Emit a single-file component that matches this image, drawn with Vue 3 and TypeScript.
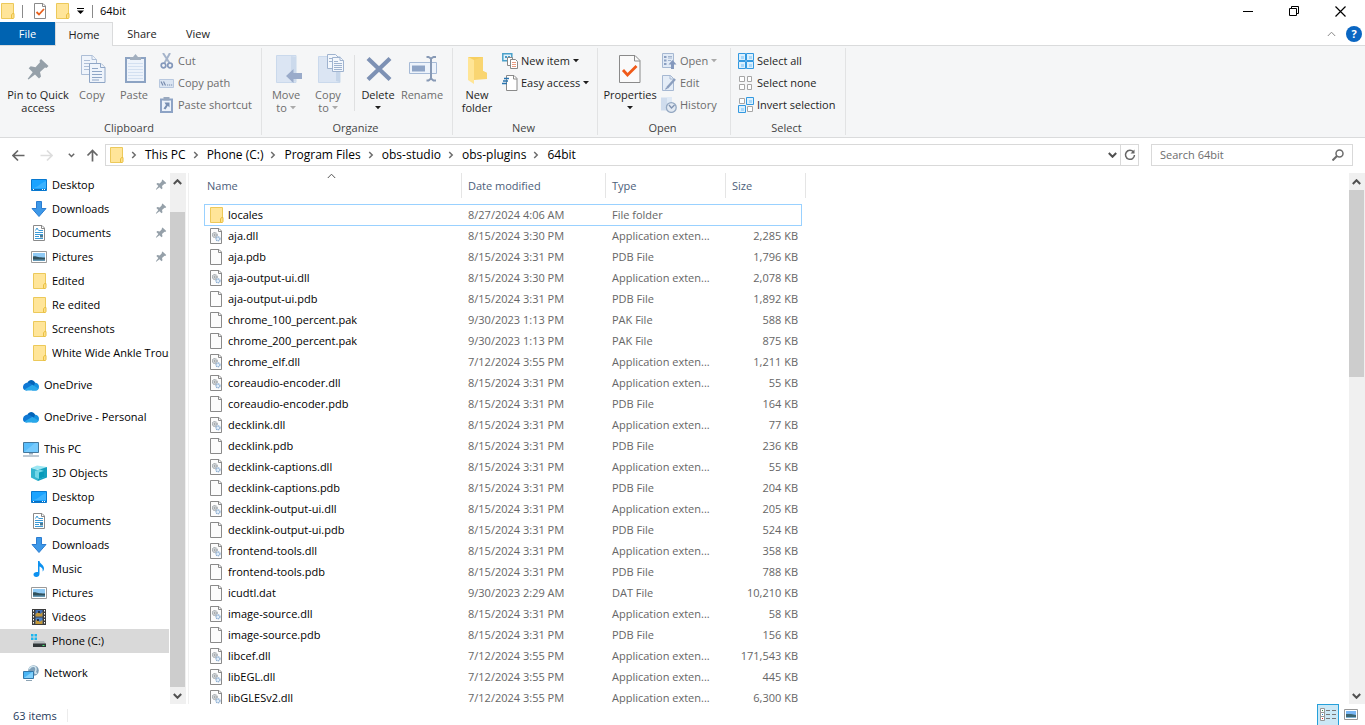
<script setup lang="ts">
interface NavItem { icon: string; label: string; pin?: boolean; root?: boolean; active?: boolean }
interface FileRow { name: string; date: string; type: string; size: string; icon: string }
interface Cmd { label: string; icon: string; off?: boolean; caret?: boolean }

const crumbs = ['This PC', 'Phone (C:)', 'Program Files', 'obs-studio', 'obs-plugins', '64bit']

const clipboardCmds: Cmd[] = [
  { label: 'Cut', icon: 'cut', off: true },
  { label: 'Copy path', icon: 'copypath', off: true },
  { label: 'Paste shortcut', icon: 'pasteshort', off: true },
]
const newCmds: Cmd[] = [
  { label: 'New item', icon: 'newitem', caret: true },
  { label: 'Easy access', icon: 'easy', caret: true },
]
const openCmds: Cmd[] = [
  { label: 'Open', icon: 'open', off: true, caret: true },
  { label: 'Edit', icon: 'edit', off: true },
  { label: 'History', icon: 'history', off: true },
]
const selectCmds: Cmd[] = [
  { label: 'Select all', icon: 'selall' },
  { label: 'Select none', icon: 'selnone' },
  { label: 'Invert selection', icon: 'selinv' },
]

const quick: NavItem[] = [
  { icon: 'desktop', label: 'Desktop', pin: true },
  { icon: 'downloads', label: 'Downloads', pin: true },
  { icon: 'documents', label: 'Documents', pin: true },
  { icon: 'pictures', label: 'Pictures', pin: true },
  { icon: 'folder', label: 'Edited' },
  { icon: 'folder', label: 'Re edited' },
  { icon: 'folder', label: 'Screenshots' },
  { icon: 'folder', label: 'White Wide Ankle Trousers' },
]
const pc: NavItem[] = [
  { icon: 'pc', label: 'This PC', root: true },
  { icon: 'objects', label: '3D Objects' },
  { icon: 'desktop', label: 'Desktop' },
  { icon: 'documents', label: 'Documents' },
  { icon: 'downloads', label: 'Downloads' },
  { icon: 'music', label: 'Music' },
  { icon: 'pictures', label: 'Pictures' },
  { icon: 'videos', label: 'Videos' },
  { icon: 'drive', label: 'Phone (C:)', active: true },
]
const navGroups: NavItem[][] = [
  quick,
  [{ icon: 'cloud', label: 'OneDrive', root: true }],
  [{ icon: 'cloud', label: 'OneDrive - Personal', root: true }],
  pc,
  [{ icon: 'network', label: 'Network', root: true }],
]

const aug = '8/15/2024 3:31 PM'
const jul = '7/12/2024 3:55 PM'
const source: [string, string, string][] = [
  ['aja.dll', '8/15/2024 3:30 PM', '2,285 KB'],
  ['aja.pdb', aug, '1,796 KB'],
  ['aja-output-ui.dll', '8/15/2024 3:30 PM', '2,078 KB'],
  ['aja-output-ui.pdb', aug, '1,892 KB'],
  ['chrome_100_percent.pak', '9/30/2023 1:13 PM', '588 KB'],
  ['chrome_200_percent.pak', '9/30/2023 1:13 PM', '875 KB'],
  ['chrome_elf.dll', jul, '1,211 KB'],
  ['coreaudio-encoder.dll', aug, '55 KB'],
  ['coreaudio-encoder.pdb', aug, '164 KB'],
  ['decklink.dll', aug, '77 KB'],
  ['decklink.pdb', aug, '236 KB'],
  ['decklink-captions.dll', aug, '55 KB'],
  ['decklink-captions.pdb', aug, '204 KB'],
  ['decklink-output-ui.dll', aug, '205 KB'],
  ['decklink-output-ui.pdb', aug, '524 KB'],
  ['frontend-tools.dll', aug, '358 KB'],
  ['frontend-tools.pdb', aug, '788 KB'],
  ['icudtl.dat', '9/30/2023 2:29 AM', '10,210 KB'],
  ['image-source.dll', aug, '58 KB'],
  ['image-source.pdb', aug, '156 KB'],
  ['libcef.dll', jul, '171,543 KB'],
  ['libEGL.dll', jul, '445 KB'],
  ['libGLESv2.dll', jul, '6,300 KB'],
]
const typeOf = (name: string): string => {
  const ext = name.slice(name.lastIndexOf('.') + 1)
  return ext === 'dll' ? 'Application exten...' : `${ext.toUpperCase()} File`
}
const files: FileRow[] = [
  { name: 'locales', date: '8/27/2024 4:06 AM', type: 'File folder', size: '', icon: 'folder' },
  ...source.map(([name, date, size]) => ({
    name, date, size, type: typeOf(name), icon: name.endsWith('.dll') ? 'dll' : 'file',
  })),
]
</script>

<template>
  <svg class="defs" aria-hidden="true">
    <symbol id="folder" viewBox="0 0 16 16"><path d="M2.500 .5h12v15h-12z" fill="#ffe599" stroke="#ecc95a" /><path d="M12.500 15.500v-3.500l1-1.500h1.500v4l-1 1z" fill="#ffe08a" stroke="#e9c042" /></symbol>
    <symbol id="file" viewBox="0 0 16 16"><path d="M2.500 .5h8.500l2.500 2.500v12.500h-11z" fill="#fcfcfc" stroke="#8a8a8a" /><path d="M10.500 .5v3h3" fill="none" stroke="#8a8a8a" /></symbol>
    <symbol id="dll" viewBox="0 0 16 16"><path d="M2.500 .5h8.500l2.500 2.500v12.500h-11z" fill="#fcfcfc" stroke="#8a8a8a" /><path d="M10.500 .5v3h3" fill="none" stroke="#8a8a8a" /><circle cx="6.800" cy="7" r="2.300" fill="#e4e7e9" stroke="#8f969b" stroke-width="1.200" stroke-dasharray="1.200 .5" /><circle cx="6.800" cy="7" r=".8" fill="#7a7f83" /><circle cx="10" cy="10.800" r="2" fill="#e3eef9" stroke="#86a9cf" stroke-width="1.200" stroke-dasharray="1.200 .5" /></symbol>
    <symbol id="props" viewBox="0 0 16 16"><path d="M2.500 .5h8.500l2.500 2.500v12.500h-11z" fill="#fff" stroke="#8a8a8a" /><path d="M10.500 .5v3h3" fill="none" stroke="#8a8a8a" /><path d="M4.500 9l2.500 2.500 5-5.500" fill="none" stroke="#e8601c" stroke-width="1.800" /></symbol>
    <symbol id="desktop" viewBox="0 0 16 16"><path d="M.5 2.500h15v11h-15z" fill="#1aa3ff" stroke="#0878cf" /><path d="M1 11C7 11 9 6 15 4v7z" fill="#3bb2ff" /><path d="M1 12.500h14" stroke="#0b6fbe" /><path d="M2 12.500h1M11 12.500h1M13 12.500h1" stroke="#fff" /></symbol>
    <symbol id="downloads" viewBox="0 0 16 16"><path d="M5.500 .5h5v7h4.500l-7 8-7-8h4.500z" fill="#3d98e8" stroke="#2b7cd0" /></symbol>
    <symbol id="documents" viewBox="0 0 16 16"><path d="M2.500 .5h8.500l2.500 2.500v12.500h-11z" fill="#fff" stroke="#8a8a8a" /><path d="M10.500 .5v3h3" fill="none" stroke="#8a8a8a" /><path d="M4.500 5.500l1.500-2.500 1.500 2.500M8 5.500h4M4 7.500h8M4 9.500h8M4 11.500h4M4 13.500h8" fill="none" stroke="#3c9ad6" /><path d="M9 10h3v2.500h-3z" fill="#4d7a93" /></symbol>
    <symbol id="pictures" viewBox="0 0 16 16"><path d="M.5 2.500h15v11h-15z" fill="#fff" stroke="#9a9a9a" /><path d="M2 4h12v8h-12z" fill="#8fcaf5" /><path d="M2 7.500c3-1 4 1 12 1v3.500h-12z" fill="#31515d" /><path d="M2 10.500h12v1.500h-12z" fill="#6699b5" /></symbol>
    <symbol id="cloud" viewBox="0 0 16 16"><path d="M4.500 5.500C6 2 10.500 2 12 5.500L14 9 4 10z" fill="#0364b8" /><path d="M0 10.500C0 7 2.500 5.500 5 5.700c2 0 3 1 5 2.500L4 13.500C1.500 13.500 0 12.500 0 10.500z" fill="#0f78d4" /><path d="M12 5.800c2 0 4 1.500 4 4 0 2.500-1.500 3.700-3.500 3.700H9z" fill="#1490df" /><path d="M1.500 12.500L9.500 7.700l6 4c-.7 1.300-1.500 1.800-3 1.800H4c-1 0-2-.4-2.500-1z" fill="#28a8ea" /></symbol>
    <symbol id="pc" viewBox="0 0 16 16"><path d="M.5 1.500h15v10h-15z" fill="#58bdfb" stroke="#45789c" /><path d="M1 11L12 2h3v9z" fill="#8ad2ff" opacity=".6" /><path d="M6 12h4v1.500h-4z" fill="#9ab" /><path d="M0 15h16" stroke="#8095a8" /></symbol>
    <symbol id="objects" viewBox="0 0 16 16"><path d="M0 3L6 .5l10 1.500-5 3.500z" fill="#9de6f2" /><path d="M0 3l7 2v11l-7-3.500z" fill="#34b5d0" /><path d="M7 5l9-3v10.500L7 16z" fill="#15a0be" /><path d="M4 6l5-1.500 4 1.500v6l-5 2-4-2z" fill="#72d7e7" /><path d="M8 7.500l5-1.500v6l-5 2z" fill="#079ab9" /></symbol>
    <symbol id="music" viewBox="0 0 16 16"><path d="M7 0h1.500c.5 3.500 4.500 3.500 4.500 7.500 0 1.500-.8 2.500-1.500 3 .8-3-1-4.200-3-5V13c0 1.800-1.500 3-3.300 3C3.500 16 2.500 15 2.500 13.500c0-1.700 2-3 4.500-2.500z" fill="#0c91f0" /></symbol>
    <symbol id="videos" viewBox="0 0 16 16"><path d="M1 0h14v16h-14z" fill="#3c3c3c" /><path d="M4.500 1h7v6.500h-7z" fill="#426fb5" /><path d="M4.500 8.500h7v6.500h-7z" fill="#4c83cb" /><path d="M4.500 5l3-2 2 2 2-2v4.500h-7zM4.500 12l2-2 2 3 3-2v4h-7z" fill="#c49838" /><path d="M7 2h2v2h-2zM6 10h2v2h-2z" fill="#263445" /><path d="M2.500 1v15M13.500 1v15" stroke="#fff" stroke-dasharray="1.500 1.500" /></symbol>
    <symbol id="drive" viewBox="0 0 16 16"><path d="M0 1h2.500v2.500h-2.500zM3.500 1h2.500v2.500h-2.500zM0 4.500h2.500v2.500h-2.500zM3.500 4.500h2.500v2.500h-2.500z" fill="#1cb5ee" /><path d="M3 8h10l2 3h-13z" fill="#b4b9bc" /><path d="M2 10.500h13v3.500h-13z" fill="#303638" /><path d="M11.500 12.500h2" stroke="#44ed71" /></symbol>
    <symbol id="network" viewBox="0 0 16 16"><circle cx="10.500" cy="5.500" r="5.300" fill="#7f9fb8" /><path d="M6 4c3-4 7-3 7 0S10 9 14 8" fill="none" stroke="#d2e6ef" stroke-width="1.500" /><path d="M.5 6.500h10v7h-10z" fill="#49b5f5" stroke="#3376a8" /><path d="M1 13l8-6h1v6z" fill="#80d0fc" /><path d="M3 15.500h6" stroke="#8da4b4" /></symbol>
    <symbol id="pin" viewBox="0 0 32 32"><path d="M19 5l7.500 7-2 2-1.500-.5-5 4.500 1 4.500-2 2-4-4-6.500 5-.8-.8 5-6.500-4-4 2-2 4.800 1 4.500-5-.5-1.500z" fill="#95a0a9" /></symbol>
    <symbol id="copy" viewBox="0 0 32 32"><g fill="#eff4fb" stroke="#adbed6"><path d="M5.500 1.500h11l4 4v15h-15z" /><path d="M16 1.500v4h4.500M8 6.500h6M8 9.500h10M8 12.500h10M8 15.500h10" /><path d="M13.500 9.500h11.500l4 4v15h-15.500z" stroke="#8fa6c6" /><path d="M24.500 9.500v4h4.500M16 14.500h6M16 17.500h10M16 20.500h10M16 23.500h10M16 26h7" stroke="#8fa6c6" /></g></symbol>
    <symbol id="paste" viewBox="0 0 32 32"><path d="M8 4h19v24h-19z" fill="#edf3fb" stroke="#8ca3c3" stroke-width="2" /><path d="M10 9.500h15M10 12.500h15M10 15.500h15M10 18.500h15M10 21.500h15M10 24.500h15" stroke="#d3e0f1" /><path d="M12 6V3h3l2.500-3L20 3h3v3z" fill="#a2afbf" /></symbol>
    <symbol id="moveto" viewBox="0 0 32 32"><path d="M6.500 1.500h19.500v27h-19.500z" fill="#dbe5f3" stroke="#cad9ec" /><path d="M21 2l5 1v24l-5 1z" fill="#ccdaec" /><path d="M16 22l7.500-7v4h8.500v6h-8.500v4z" fill="#9aabca" /></symbol>
    <symbol id="copyto" viewBox="0 0 32 32"><path d="M6.500 2.500h21.500v26h-21.500z" fill="#dbe5f3" stroke="#cad9ec" /><path d="M24 18l4-1v11l-4-1z" fill="#c5d5e9" /><g fill="#f3f7fc" stroke="#9fb3cf"><path d="M15.500 .5h8l3 3v11h-11z" /><path d="M17 4.500h5M17 7.500h5" /><path d="M20.500 3.500h8l3 3v11h-11z" /><path d="M28 3.500v3h3.500M22 7.500h4M22 9.500h8M22 11.500h8M22 13.500h8M22 15.500h8" /></g></symbol>
    <symbol id="delete" viewBox="0 0 32 32"><path d="M6 4.500l22 21M28 4.500l-22 21" stroke="#7d91b4" stroke-width="4.200" /></symbol>
    <symbol id="rename" viewBox="0 0 32 32"><path d="M3.500 8.500h27v11h-27z" fill="#edf3fb" stroke="#a6bad6" /><path d="M6 11.500h13v6h-13z" fill="#8ea4c6" /><path d="M20.500 3h2l2.500 1.500 2.500-1.500h2.500M25 4.500v20M20.500 26.500h2l2.500-2 2.500 2h2.500" fill="none" stroke="#8799b5" stroke-width="2" /></symbol>
    <symbol id="newfolder" viewBox="0 0 32 32"><path d="M7 3h15v14l4 2v6h-15z" fill="#f7cf60" /><path d="M7 3l6 3v24l-6-4z" fill="#ffe596" /><path d="M13 6l9-3v14l4 2v6l-13 1z" fill="#f9d571" /></symbol>
    <symbol id="bigprops" viewBox="0 0 32 32"><path d="M5.500 1.500h15.500l5 5v22h-20.500z" fill="#fafafa" stroke="#8a8a8a" /><path d="M20.500 1.500v5.500h5.500" fill="none" stroke="#8a8a8a" /><path d="M9 16l4.500 5L22.500 12" fill="none" stroke="#f05a19" stroke-width="2.800" /></symbol>
    <symbol id="cut" viewBox="0 0 16 16"><path d="M4 0l6.500 10M11 0L5.500 10" stroke="#a5b4cb" stroke-width="2" /><circle cx="4.500" cy="12.500" r="2.300" fill="none" stroke="#8498bb" stroke-width="1.700" /><circle cx="11" cy="12.500" r="2.300" fill="none" stroke="#8498bb" stroke-width="1.700" /></symbol>
    <symbol id="copypath" viewBox="0 0 16 16"><path d="M.5 4.500h14v8h-14z" fill="#dbe5f2" stroke="#b8c8df" /><path d="M2 6.500l2 4M4.500 6.500l2 4M8 10h1.200M10 10h1.200M12 10h1.200" stroke="#778bad" stroke-width="1.200" /></symbol>
    <symbol id="pasteshort" viewBox="0 0 16 16"><path d="M2 2.500h11v12.500h-11z" fill="#edf3fb" stroke="#8da3c5" stroke-width="2" /><path d="M4.500 3.500V0h6v3.500z" fill="#98a8bf" /><path d="M5.500 5.500h5v5l-1.700-1.700-2.300 3.700-2-1 2.500-3.500z" fill="#788fb3" /></symbol>
    <symbol id="newitem" viewBox="0 0 16 16"><path d="M.8 .8h9v7h-9z" fill="#e4f3fb" stroke="#4aa0ca" stroke-width="1.500" /><path d="M3 3h2v2h-2zM6 3h2v2h-2z" fill="#4c9cc7" /><path d="M5.500 4.500h5v8h-5z" fill="#fff" stroke="#888" /><path d="M8.500 6.500h5l2 2v7h-7z" fill="#fff" stroke="#888" /><path d="M10 9.500h4M10 11.500h4M10 13.500h4" stroke="#e99c81" /></symbol>
    <symbol id="easy" viewBox="0 0 16 16"><path d="M4.500 .5h7.500l3 3v12h-10.500z" fill="#fff" stroke="#8a8a8a" /><path d="M11.500 .5v3.500h3.500" fill="none" stroke="#8a8a8a" /><path d="M2 3.500h5M1 6h5M0 8.500h5" stroke="#2974af" stroke-width="1.400" /></symbol>
    <symbol id="open" viewBox="0 0 16 16"><path d="M1.500 .5h11v14h-11z" fill="#e2ebf6" stroke="#a6b8d2" /><path d="M3 3h2.500v2h-2.500zM3 6.500h2.500v2h-2.500zM3 10h2.500v2h-2.500z" fill="#8ba0c2" /><path d="M7 3.500h4M7 5h4M7 7.500h3" stroke="#a2b4cf" /><path d="M11.500 7l4 4.500h-2.500v4.500h-3v-4.500h-2.500z" fill="#8398bd" /></symbol>
    <symbol id="edit" viewBox="0 0 16 16"><path d="M1.500 .5h8l3 3v12h-11z" fill="#e5edf7" stroke="#a6b8d2" /><path d="M9 .5v3.500h3.500" fill="none" stroke="#a6b8d2" /><path d="M14 4l-8 9" stroke="#8c9fbe" stroke-width="2.400" /><path d="M5 12.500l1.500 1.200-2.500 1z" fill="#8297bb" /></symbol>
    <symbol id="history" viewBox="0 0 16 16"><path d="M0 .5h9v13h-9z" fill="#cfdced" /><path d="M6 0h5v7h-5z" fill="#dfe9f5" /><circle cx="10.300" cy="10.500" r="4.900" fill="#e2e9f2" stroke="#94a8c2" stroke-width="1.300" /><path d="M8 8l2.500 3 3-3" fill="none" stroke="#8093b1" stroke-width="1.300" /></symbol>
    <symbol id="selall" viewBox="0 0 16 16"><path d="M.5 .5h7v7h-7zM8.500 .5h7v7h-7zM.5 8.500h7v7h-7zM8.500 8.500h7v7h-7z" fill="#dcf0fd" stroke="#3399e0" /><path d="M3 3h3v3h-3zM11 3h3v3h-3zM3 11h3v3h-3zM11 11h3v3h-3z" fill="#a9d8f9" /></symbol>
    <symbol id="selnone" viewBox="0 0 16 16"><path d="M1.500 1.500h5v5h-5zM9.500 1.500h4v5h-4zM1.500 9.500h5v5h-5zM9.500 9.500h4v5h-4z" fill="#fff" stroke="#a6a6a6" /></symbol>
    <symbol id="selinv" viewBox="0 0 16 16"><path d="M1.500 1.500h5v5h-5zM9.500 9.500h5v5h-5z" fill="#fff" stroke="#a6a6a6" /><path d="M8.500 .5h7v7h-7zM.5 8.500h7v7h-7z" fill="#dcf0fd" stroke="#3399e0" /><path d="M11 3h3v3h-3zM3 11h3v3h-3z" fill="#a9d8f9" /></symbol>
    <symbol id="caret" viewBox="0 0 6 4"><path d="M0 0h6L3 3.300z" fill="currentColor" /></symbol>
    <symbol id="up" viewBox="0 0 9 6"><path d="M.8 5l3.700-3.800L8.200 5" fill="none" stroke="currentColor" /></symbol>
    <symbol id="down" viewBox="0 0 9 6"><path d="M.8 1l3.700 3.800L8.200 1" fill="none" stroke="currentColor" /></symbol>
    <symbol id="chev" viewBox="0 0 6 8"><path d="M1.200 1l3 3-3 3" fill="none" stroke="#6c6c6c" stroke-width="1.500" /></symbol>
  </svg>

  <div class="window">
    <header class="titlebar">
      <svg class="i16"><use href="#folder" /></svg>
      <span class="tick"></span>
      <button class="bare qa" aria-label="Properties"><svg class="i16"><use href="#props" /></svg></button>
      <button class="bare qa" aria-label="New folder"><svg class="i16"><use href="#folder" /></svg></button>
      <button class="bare customize" aria-label="Customize Quick Access Toolbar">
        <svg width="7" height="6" viewBox="0 0 7 6"><path d="M0 .5h7" stroke="#000" /><path d="M0 2.500h7L3.500 6z" /></svg>
      </button>
      <span class="tick last"></span>
      <span class="title">64bit</span>
      <div class="controls">
        <button class="bare" aria-label="Minimize"><svg width="11" height="11" viewBox="0 0 11 11"><path d="M0 5.500h10" stroke="#000" /></svg></button>
        <button class="bare" aria-label="Restore"><svg width="11" height="11" viewBox="0 0 11 11"><path d="M.5 2.500h7v7h-7zM2.500 2.500v-2h7v7h-2" fill="none" stroke="#000" /></svg></button>
        <button class="bare" aria-label="Close"><svg width="11" height="11" viewBox="0 0 11 11"><path d="M.5 .5l10 10M10.500 .5l-10 10" stroke="#000" stroke-width="1.200" /></svg></button>
      </div>
    </header>

    <nav class="tabs">
      <button class="bare tab file">File</button>
      <button class="bare tab home">Home</button>
      <button class="bare tab">Share</button>
      <button class="bare tab">View</button>
      <div class="tabtools">
        <button class="bare collapse" aria-label="Minimize the Ribbon"><svg class="ch"><use href="#up" /></svg></button>
        <button class="bare help" aria-label="Help">?</button>
      </div>
    </nav>

    <section class="ribbon">
      <div class="group clip">
        <div class="cmds">
          <button class="bare big w66"><svg class="i32"><use href="#pin" /></svg>Pin to Quick<br>access</button>
          <button class="bare big w42 off"><svg class="i32"><use href="#copy" /></svg>Copy</button>
          <button class="bare big w42 off"><svg class="i32"><use href="#paste" /></svg>Paste</button>
          <div class="col">
            <button v-for="c in clipboardCmds" :key="c.label" class="bare small" :class="{ off: c.off }"><svg class="i16"><use :href="'#' + c.icon" /></svg>{{ c.label }}</button>
          </div>
        </div>
        <div class="glabel">Clipboard</div>
      </div>
      <div class="group org">
        <div class="cmds">
          <button class="bare big w42 off"><svg class="i32"><use href="#moveto" /></svg>Move<br>to <svg class="caret"><use href="#caret" /></svg></button>
          <button class="bare big w42 off"><svg class="i32"><use href="#copyto" /></svg>Copy<br>to <svg class="caret"><use href="#caret" /></svg></button>
          <span class="inner"></span>
          <button class="bare big w42"><svg class="i32"><use href="#delete" /></svg>Delete<br><svg class="caret"><use href="#caret" /></svg></button>
          <button class="bare big w46 off"><svg class="i32"><use href="#rename" /></svg>Rename</button>
        </div>
        <div class="glabel">Organize</div>
      </div>
      <div class="group new">
        <div class="cmds">
          <button class="bare big w42"><svg class="i32"><use href="#newfolder" /></svg>New<br>folder</button>
          <div class="col">
            <button v-for="c in newCmds" :key="c.label" class="bare small"><svg class="i16"><use :href="'#' + c.icon" /></svg>{{ c.label }}<svg class="caret"><use href="#caret" /></svg></button>
          </div>
        </div>
        <div class="glabel">New</div>
      </div>
      <div class="group opn">
        <div class="cmds">
          <button class="bare big w54"><svg class="i32"><use href="#bigprops" /></svg>Properties<br><svg class="caret"><use href="#caret" /></svg></button>
          <div class="col">
            <button v-for="c in openCmds" :key="c.label" class="bare small off"><svg class="i16"><use :href="'#' + c.icon" /></svg>{{ c.label }}<svg v-if="c.caret" class="caret"><use href="#caret" /></svg></button>
          </div>
        </div>
        <div class="glabel">Open</div>
      </div>
      <div class="group sel">
        <div class="cmds">
          <div class="col">
            <button v-for="c in selectCmds" :key="c.label" class="bare small"><svg class="i16"><use :href="'#' + c.icon" /></svg>{{ c.label }}</button>
          </div>
        </div>
        <div class="glabel">Select</div>
      </div>
    </section>

    <div class="addressbar">
      <button class="bare arrow" aria-label="Back"><svg width="13" height="13" viewBox="0 0 13 13"><path d="M12.500 6.500h-11M6 1.500l-5 5 5 5" fill="none" stroke="#666" stroke-width="1.700" /></svg></button>
      <button class="bare arrow" aria-label="Forward"><svg width="13" height="13" viewBox="0 0 13 13"><path d="M.5 6.500h11M7 1.500l5 5-5 5" fill="none" stroke="#ddd" stroke-width="1.700" /></svg></button>
      <button class="bare recent" aria-label="Recent locations"><svg width="7" height="5" viewBox="0 0 7 5"><path d="M.8 .8l2.700 2.700L6.200 .8" fill="none" stroke="#666" stroke-width="1.500" /></svg></button>
      <button class="bare upward" aria-label="Up"><svg width="13" height="13" viewBox="0 0 13 13"><path d="M6.500 12.500v-11M1.500 6.500l5-5 5 5" fill="none" stroke="#666" stroke-width="1.700" /></svg></button>
      <div class="address">
        <svg class="i16"><use href="#folder" /></svg>
        <template v-for="c in crumbs" :key="c">
          <svg class="chev"><use href="#chev" /></svg>
          <a class="crumb" href="#">{{ c }}</a>
        </template>
        <button class="bare prev" aria-label="Previous locations"><svg class="ch bold"><use href="#down" /></svg></button>
        <button class="bare refresh" aria-label="Refresh"><svg width="12" height="12" viewBox="0 0 12 12"><path d="M9.500 3A4.500 4.500 0 1 0 10.500 6" fill="none" stroke="#666" stroke-width="1.500" /><path d="M10.500 .5v4h-4z" fill="#666" /></svg></button>
      </div>
      <label class="search">
        <input type="text" placeholder="Search 64bit" aria-label="Search 64bit">
        <svg width="12" height="12" viewBox="0 0 12 12"><circle cx="7.500" cy="4.500" r="3.500" fill="none" stroke="#6c6c6c" stroke-width="1.500" /><path d="M5 7l-4.500 4.500" stroke="#6c6c6c" stroke-width="2" /></svg>
      </label>
    </div>

    <main class="body">
      <nav class="tree">
        <ul v-for="(g, gi) in navGroups" :key="gi">
          <li v-for="n in g" :key="n.label">
            <a href="#" :class="{ root: n.root, active: n.active }">
              <svg class="i16"><use :href="'#' + n.icon" /></svg>
              <span class="nlabel">{{ n.label }}</span>
              <svg v-if="n.pin" class="pinned"><use href="#pin" /></svg>
            </a>
          </li>
        </ul>
      </nav>
      <div class="scroll">
        <button class="bare" aria-label="Scroll folders up"><svg class="ch bold"><use href="#up" /></svg></button>
        <div class="track"><div class="thumb tall"></div></div>
        <button class="bare" aria-label="Scroll folders down"><svg class="ch bold"><use href="#down" /></svg></button>
      </div>
      <section class="list">
        <table>
          <colgroup><col class="c1"><col class="c2"><col class="c3"><col class="c4"><col class="c5"></colgroup>
          <thead>
            <tr>
              <th><button class="bare">Name</button><svg class="sort"><use href="#up" /></svg></th>
              <th><button class="bare">Date modified</button></th>
              <th><button class="bare">Type</button></th>
              <th colspan="2"><button class="bare">Size</button></th>
            </tr>
          </thead>
          <tbody>
            <tr v-for="(f, i) in files" :key="f.name" :class="{ focus: i === 0 }">
              <td><div class="fname"><svg class="i16"><use :href="'#' + f.icon" /></svg>{{ f.name }}</div></td>
              <td>{{ f.date }}</td>
              <td>{{ f.type }}</td>
              <td class="size">{{ f.size }}</td>
              <td class="pad"></td>
            </tr>
          </tbody>
        </table>
      </section>
      <div class="scroll">
        <button class="bare" aria-label="Scroll files up"><svg class="ch bold"><use href="#up" /></svg></button>
        <div class="track"><div class="thumb"></div></div>
        <button class="bare" aria-label="Scroll files down"><svg class="ch bold"><use href="#down" /></svg></button>
      </div>
    </main>

    <footer class="status">
      <span class="count">63 items</span>
      <button class="bare view on" aria-label="Details"><svg width="16" height="14" viewBox="0 0 16 14"><path d="M.5 .5h4v4h-4zM.5 4.500h4v4h-4zM.5 8.500h4v4h-4z" fill="#fff" stroke="#969696" /><path d="M6 2.500h4M12 2.500h4M6 6.500h4M12 6.500h4M6 10.500h4M12 10.500h4" stroke="#777" /><path d="M2 2h1v1h-1z" fill="#484" /><path d="M2 6h1v1h-1z" fill="#28c" /><path d="M2 10h1v1h-1z" fill="#d22" /></svg></button>
      <button class="bare view thumbs" aria-label="Large thumbnails"><svg width="14" height="11" viewBox="0 0 14 11"><path d="M.5 .5h13v10h-13z" fill="#fff" stroke="#969696" /><path d="M2 2h10v7h-10z" fill="#78b6f5" /><path d="M2 5h5l5 1v3h-10z" fill="#3d6672" /><path d="M2 8h10v1h-10z" fill="#7fb2d2" /></svg></button>
    </footer>
  </div>
</template>

<style>
html, body, #app { height: 100%; }
body { margin: 0; overflow: hidden; }
</style>

<style scoped>
.defs { position: absolute; width: 0; height: 0; }
.window {
  display: flex; flex-direction: column; height: 100vh; background: #fff; color: #000;
  font: 11px/16px "Open Sans", "Noto Sans", sans-serif; overflow: hidden;
}
.bare { border: 0; padding: 0; margin: 0; background: none; font: inherit; color: inherit; text-align: left; white-space: nowrap; }
svg { display: block; flex: none; }
.i16 { width: 16px; height: 16px; }
.i32 { width: 32px; height: 32px; }
.ch { width: 9px; height: 6px; color: #505050; }
.ch.bold { stroke-width: 2; }
.caret { width: 6px; height: 4px; }
a { color: inherit; text-decoration: none; }

.titlebar { display: flex; align-items: center; height: 22px; }
.titlebar > .i16 { margin-left: -1px; }
.tick { width: 1px; height: 13px; background: #8a8a8a; margin-left: 7px; }
.qa { margin-left: 6px; }
.tick + .qa { margin-left: 9px; }
.customize { margin-left: 7px; }
.tick.last { margin-left: 8px; }
.title { margin-left: 7px; }
.controls { display: flex; margin-left: auto; margin-right: 2px; height: 18px; }
.controls button { width: 46px; display: flex; align-items: center; justify-content: center; }

.tabs { display: flex; height: 23px; border-bottom: 1px solid #dadbdc; }
.tab { width: 56px; text-align: center; color: #222; }
.file { background: #0063b1; color: #fff; height: 23px; width: 55px; }
.home { box-sizing: border-box; width: 58px; height: 24px; background: #f5f6f7; border: 1px solid #dadbdc; border-bottom: 0; margin-right: 1px; }
.tabtools { display: flex; align-items: center; gap: 10px; margin-left: auto; padding-right: 3px; }
.collapse .ch { color: #888; }
.help { width: 16px; height: 16px; border-radius: 8px; background: #0a66c2; color: #fff; text-align: center; font-weight: 700; }

.ribbon { display: flex; background: #f5f6f7; border-bottom: 1px solid #dadbdc; height: 91px; flex: none; color: #1e1e1e; }
.group { position: relative; display: flex; flex-direction: column; }
.group::after { content: ""; position: absolute; right: 0; top: 2px; bottom: 2px; width: 1px; background: #e2e3e4; }
.clip { width: 262px; }
.org { width: 191px; }
.new { width: 145px; }
.opn { width: 133px; }
.sel { width: 115px; }
.cmds { display: flex; height: 74px; padding-left: 3px; }
.clip .cmds, .opn .cmds { padding-left: 5px; }
.glabel { text-align: center; color: #444; padding-right: 4px; }
.big { display: block; padding-top: 8px; line-height: 13px; text-align: center; align-self: flex-start; }
.big .i32 { margin: 0 auto 2px; }
.big .caret { display: inline-block; vertical-align: 2px; }
.w42 { width: 42px; }
.w46 { width: 46px; }
.w54 { width: 54px; }
.w66 { width: 66px; }
.off { color: #6d6d6d; }
.off .caret { color: #aaa; }
.inner { width: 1px; background: #dfe0e1; margin: 9px 2px 9px 5px; }
.col { display: flex; flex-direction: column; padding-top: 4px; margin-left: 4px; }
.small { display: flex; align-items: center; gap: 3px; height: 22px; }

.addressbar { display: flex; align-items: center; box-sizing: border-box; height: 35px; flex: none; padding: 0 12px 1px; }
.arrow { margin-right: 15px; }
.recent { margin-right: 11px; }
.upward { margin-right: 6px; }
.address { flex: 1; display: flex; align-items: center; box-sizing: border-box; height: 22px; border: 1px solid #d9d9d9; padding-left: 2px; font-size: 12px; }
.chev { width: 6px; height: 8px; margin: 0 8px 0 7px; }
.prev { margin-left: auto; margin-right: 3px; }
.refresh { border-left: 1px solid #d9d9d9; height: 20px; padding: 0 2px 0 3px; display: flex; align-items: center; }
.search { display: flex; align-items: center; box-sizing: border-box; width: 202px; height: 22px; border: 1px solid #d9d9d9; margin-left: 12px; padding: 0 8px; }
.search input { flex: 1; min-width: 0; border: 0; padding: 0; outline: 0; font: inherit; background: none; }
.search input::placeholder { color: #6d6d6d; opacity: 1; }

.body { flex: 1; min-height: 0; display: flex; overflow: hidden; }
.tree { width: 169px; margin-right: 1px; overflow: hidden; flex: none; }
.tree ul { list-style: none; margin: 0 0 8px; padding: 0; }
.tree a { display: flex; align-items: center; gap: 5px; height: 24px; padding-left: 31px; }
.tree a.root { padding-left: 23px; }
.tree a.active { background: #d9d9d9; }
.nlabel { flex: 1; white-space: nowrap; overflow: hidden; }
.pinned { width: 16px; height: 16px; }
.scroll { width: 16px; flex: none; display: flex; flex-direction: column; background: #f0f0f0; }
.scroll button { height: 17px; padding-right: 1px; display: flex; align-items: center; justify-content: center; }
.track { flex: 1; }
.thumb { height: 187px; margin-right: 1px; background: #cdcdcd; }
.thumb.tall { height: calc(100% - 22px); margin-top: 22px; }

.list { flex: 1; min-width: 0; overflow: hidden; border-left: 1px solid #f0f0f0; margin-left: 2px; padding-left: 15px; }
table { border-collapse: separate; border-spacing: 0; table-layout: fixed; width: 602px; }
.c1 { width: 258px; }
.c2 { width: 144px; }
.c3 { width: 120px; }
.c4 { width: 76px; }
.c5 { width: 4px; }
th { position: relative; padding: 0 0 6px; font-weight: 400; }
.list th button { display: block; box-sizing: border-box; width: 100%; height: 25px; padding-left: 6px; border-right: 1px solid #e5e5e5; color: #4c607a; }
.list th:first-child button { padding-left: 3px; }
.sort { position: absolute; left: 50%; top: 0; margin-left: -6px; width: 9px; height: 6px; color: #555; }
td { height: 21px; padding: 0 0 0 6px; color: #666; white-space: nowrap; }
td:first-child { padding-left: 4px; color: #000; }
.fname { display: flex; align-items: center; gap: 4px; }
td.size { text-align: right; padding: 0 4px 0 0; }
td.pad { padding: 0; }
.focus td:not(.pad) { box-shadow: inset 0 1px #99d1ff, 0 1px #99d1ff; }
.focus td:first-child { box-shadow: inset 0 1px #99d1ff, 0 1px #99d1ff, inset 1px 0 #99d1ff; }
.focus td.size { box-shadow: inset 0 1px #99d1ff, 0 1px #99d1ff, inset -1px 0 #99d1ff; }

.status { display: flex; align-items: stretch; height: 21px; flex: none; padding-right: 2px; color: #1e395b; }
.count { line-height: 13px; height: 13px; margin: 5px auto 0 0; padding: 0 10px 0 13px; border-right: 1px solid #ececec; }
.view { display: flex; align-items: center; justify-content: center; width: 22px; box-sizing: border-box; }
.view.thumbs { width: 24px; }
.view.on { background: #cbe8f6; border: 1px solid #26a0da; border-bottom: 0; }
</style>
